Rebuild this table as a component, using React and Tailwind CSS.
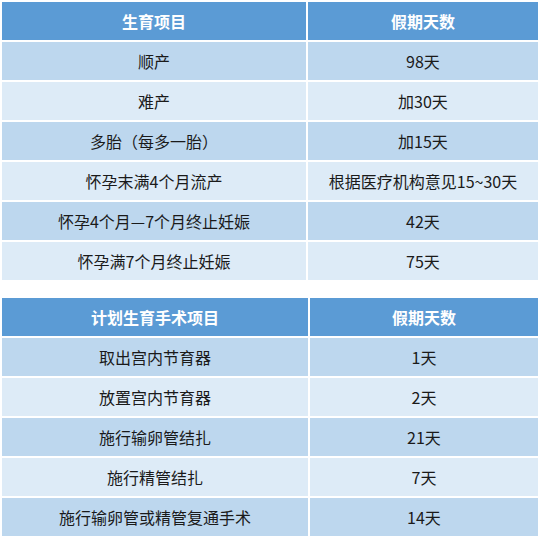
const birthRows = [
  ['顺产', '98天'],
  ['难产', '加30天'],
  ['多胎（每多一胎）', '加15天'],
  ['怀孕末满4个月流产', '根据医疗机构意见15~30天'],
  ['怀孕4个月—7个月终止妊娠', '42天'],
  ['怀孕满7个月终止妊娠', '75天'],
]

const surgeryRows = [
  ['取出宫内节育器', '1天'],
  ['放置宫内节育器', '2天'],
  ['施行输卵管结扎', '21天'],
  ['施行精管结扎', '7天'],
  ['施行输卵管或精管复通手术', '14天'],
]

function LeaveTable({ title, rows, firstCol }) {
  return (
    <div className="flex flex-col gap-[2px]">
      <div className="flex gap-[2px] h-[38px] bg-white">
        <div className={`${firstCol} flex items-center justify-center bg-[#5b9bd5] text-white font-bold text-[16px]`}>
          {title}
        </div>
        <div className="flex-1 flex items-center justify-center bg-[#5b9bd5] text-white font-bold text-[16px]">
          假期天数
        </div>
      </div>
      {rows.map((r, i) => {
        const bg = i % 2 === 0 ? 'bg-[#bdd7ee]' : 'bg-[#ddebf7]'
        return (
          <div key={i} className="flex gap-[2px] h-[38px]">
            <div className={`${firstCol} ${bg} flex items-center justify-center text-[16px] text-[#1a1a1a]`}>
              {r[0]}
            </div>
            <div className={`flex-1 ${bg} flex items-center justify-center text-[16px] text-[#1a1a1a]`}>
              {r[1]}
            </div>
          </div>
        )
      })}
    </div>
  )
}

export default function App() {
  return (
    <div
      className="w-[542px] h-[542px] bg-white pt-[2px] pl-[2px] pr-[4px] flex flex-col gap-[18px]"
      style={{ fontFamily: '"Noto Sans CJK SC", "Noto Sans", sans-serif' }}
    >
      <LeaveTable title="生育项目" rows={birthRows} firstCol="w-[304px]" />
      <LeaveTable title="计划生育手术项目" rows={surgeryRows} firstCol="w-[306px]" />
    </div>
  )
}
